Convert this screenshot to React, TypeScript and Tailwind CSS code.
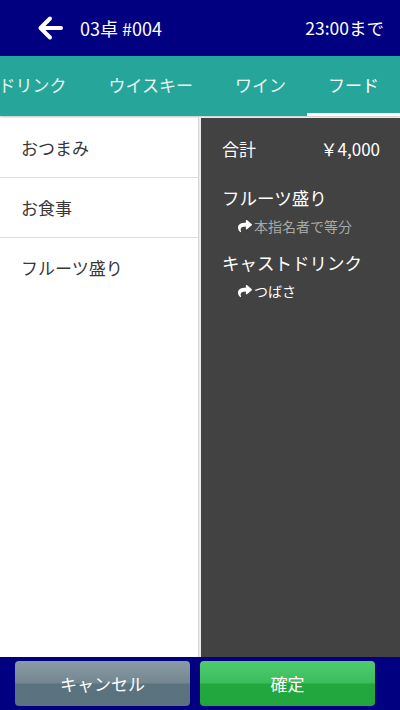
import React from "react";
import { FaShare } from "react-icons/fa";

const tabs = ["ドリンク", "ウイスキー", "ワイン", "フード"];
const categories = ["おつまみ", "お食事", "フルーツ盛り"];

const orders = [
  { name: "フルーツ盛り", note: "本指名者で等分", muted: true },
  { name: "キャストドリンク", note: "つばさ", muted: false },
];

const App: React.FC = () => {
  return (
    <div
      className="w-[400px] h-[710px] flex flex-col overflow-hidden bg-white"
      style={{ fontFamily: '"Noto Sans CJK JP", "Noto Sans", sans-serif' }}
    >
      {/* header */}
      <div className="h-[56px] shrink-0 bg-[#000080] flex items-center pl-[36px] pr-[16px] text-white">
        <svg width="28" height="28" viewBox="0 0 28 28" className="shrink-0">
          <path
            d="M25 14H5M14 4.5L4.5 14L14 23.5"
            fill="none"
            stroke="white"
            strokeWidth="4"
            strokeLinecap="round"
            strokeLinejoin="round"
          />
        </svg>
        <span className="ml-[16px] text-[18px]">03卓 #004</span>
        <span className="ml-auto text-[17.5px]">23:00まで</span>
      </div>

      {/* tabs */}
      <div className="h-[60px] shrink-0 bg-[#26a69a] flex justify-end overflow-hidden shadow-[0_1px_2px_rgba(0,0,0,0.25)] relative z-10">
        {tabs.map((t, i) => {
          const active = i === tabs.length - 1;
          return (
            <div
              key={t}
              className={`shrink-0 px-[21px] h-full flex items-center text-[17px] border-b-[3px] ${
                active ? "border-white text-white" : "border-transparent text-[#e6f4f2]"
              }`}
            >
              {t}
            </div>
          );
        })}
      </div>

      {/* body */}
      <div className="flex-1 flex min-h-0 pt-[2px] bg-white">
        <div className="w-[199px] shrink-0 border-r border-[#d4d4d4] bg-white">
          {categories.map((c, i) => (
            <div
              key={c}
              className={`h-[60px] flex items-center pl-[21px] text-[17px] text-[#383838] ${
                i < categories.length - 1 ? "border-b border-[#dcdcdc]" : ""
              }`}
            >
              {c}
            </div>
          ))}
        </div>
        <div className="w-[2px] shrink-0 bg-[#ececec]" />
        <div className="flex-1 bg-[#424242] text-white pl-[21px] pr-[20px] pt-[19px]">
          <div className="flex justify-between items-center text-[17px] h-[24px]">
            <span>合計</span>
            <span>￥4,000</span>
          </div>
          <div className="mt-[25px]">
            {orders.map((o, i) => (
              <div key={o.name} className={i > 0 ? "mt-[16px]" : ""}>
                <div className="text-[17.5px] leading-[24px]">{o.name}</div>
                <div className="flex items-center pl-[16px] mt-[7px] text-[14px] leading-[18px]">
                  <FaShare className="text-white w-[14px] h-[14px] mr-[2px]" />
                  <span className={o.muted ? "text-[#a8a8a8]" : "text-white"}>{o.note}</span>
                </div>
              </div>
            ))}
          </div>
        </div>
      </div>

      {/* footer */}
      <div className="h-[53px] shrink-0 bg-[#000080] flex gap-[10px] px-[15px] pt-[4px]">
        <button className="w-[175px] h-[45px] rounded-[4px] text-white text-[17px] bg-[linear-gradient(to_bottom,#8a9ba6_0%,#74878f_48%,#5b727f_52%,#5a717e_100%)]">
          キャンセル
        </button>
        <button className="w-[175px] h-[45px] rounded-[4px] text-white text-[17px] bg-[linear-gradient(to_bottom,#4fcb70_0%,#3cbd5c_48%,#22a83f_52%,#20a63c_100%)]">
          確定
        </button>
      </div>
    </div>
  );
};

export default App;
